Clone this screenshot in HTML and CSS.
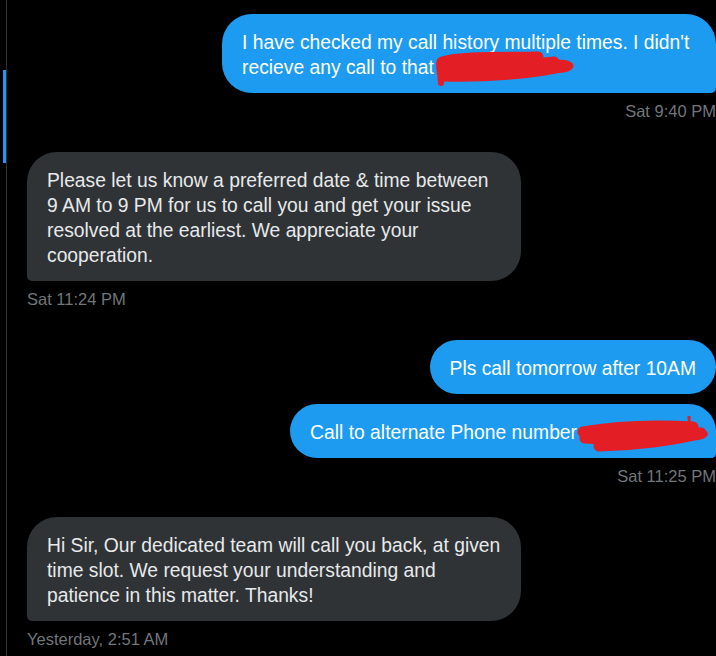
FILE: index.html
```html
<!DOCTYPE html>
<html>
<head>
<meta charset="utf-8">
<link rel="stylesheet" href="styles.css">
</head>
<body>
<div class="app">
  <aside class="side"><div class="indicator"></div></aside>
  <main class="convo">
    <section class="group out">
      <div class="bubble wide last">I have checked my call history multiple times. I didn't<br>recieve any call to that<span class="redact r1"><svg class="scribble" width="150" height="40" viewBox="0 0 150 40"><path d="M8 12 C30 6 70 8 104 7 C80 12 40 14 8 18 C40 20 90 16 120 12 C100 20 50 24 10 26 C50 27 100 24 130 16" fill="none" stroke="#e31e24" stroke-width="11" stroke-linecap="round" stroke-linejoin="round"/><path d="M108 13 C125 10 140 12 137 17 C134 22 116 22 110 20" fill="none" stroke="#e31e24" stroke-width="4" stroke-linecap="round"/><path d="M5 14 L7 33" stroke="#e31e24" stroke-width="6" stroke-linecap="round"/></svg></span></div>
      <div class="time">Sat 9:40 PM</div>
    </section>
    <section class="group in">
      <div class="bubble wide last">Please let us know a preferred date &amp; time between<br>9 AM to 9 PM for us to call you and get your issue<br>resolved at the earliest. We appreciate your<br>cooperation.</div>
      <div class="time">Sat 11:24 PM</div>
    </section>
    <section class="group out">
      <div class="bubble">Pls call tomorrow after 10AM</div>
      <div class="bubble last">Call to alternate Phone number<span class="redact r2"><svg class="scribble" width="140" height="40" viewBox="0 0 140 40"><path d="M6 16 C40 10 80 9 116 11 C90 16 40 18 8 22 C40 24 90 20 124 17 C100 24 60 29 22 30" fill="none" stroke="#e31e24" stroke-width="11" stroke-linecap="round" stroke-linejoin="round"/><path d="M112 1 L113 22" stroke="#e31e24" stroke-width="3" stroke-linecap="round"/><path d="M98 16 C115 12 132 14 129 19 C126 24 108 24 100 22" fill="none" stroke="#e31e24" stroke-width="3" stroke-linecap="round"/></svg></span></div>
      <div class="time">Sat 11:25 PM</div>
    </section>
    <section class="group in">
      <div class="bubble wide last">Hi Sir, Our dedicated team will call you back, at given<br>time slot. We request your understanding and<br>patience in this matter. Thanks!</div>
      <div class="time">Yesterday, 2:51 AM</div>
    </section>
  </main>
</div>
</body>
</html>
```

FILE: styles.css
```css
html, body {
  margin: 0;
  padding: 0;
  background: #000;
}
body {
  width: 716px;
  height: 656px;
  overflow: hidden;
  font-family: "Liberation Sans", Arial, sans-serif;
  -webkit-font-smoothing: antialiased;
}
.app {
  display: flex;
  height: 656px;
}
.side {
  flex: none;
  width: 6px;
  border-right: 1px solid #2f3336;
}
.indicator {
  margin-top: 70px;
  margin-left: 3px;
  width: 3px;
  height: 93px;
  background: #1d9bf0;
}
.convo {
  flex: none;
  width: 689px;
  padding: 14px 0 0 20px;
  display: flex;
  flex-direction: column;
}
.group {
  display: flex;
  flex-direction: column;
  margin-bottom: 31px;
}
.group.out { align-items: flex-end; }
.group.in { align-items: flex-start; }
.bubble {
  padding: 15.5px 20px 13.5px 20px;
  border-radius: 30px;
  font-size: 19.3px;
  line-height: 25px;
  white-space: nowrap;
}
.bubble.wide {
  width: 454px;
}
.bubble + .bubble {
  margin-top: 10px;
}
.out .bubble {
  background: #1d9bf0;
  color: #fff;
}
.out .bubble.last {
  border-bottom-right-radius: 5px;
}
.in .bubble {
  background: #2f3336;
  color: #e7e9ea;
}
.in .bubble.last {
  border-bottom-left-radius: 5px;
}
.time {
  margin-top: 8px;
  font-size: 16.5px;
  line-height: 20px;
  color: #71767b;
}
.redact {
  position: relative;
  display: inline-block;
  vertical-align: top;
  height: 25px;
}
.r1 { width: 138px; }
.r2 { width: 119px; }
.scribble {
  position: absolute;
  left: 0;
  top: -5px;
}
.r2 .scribble { top: -4px; }
```
